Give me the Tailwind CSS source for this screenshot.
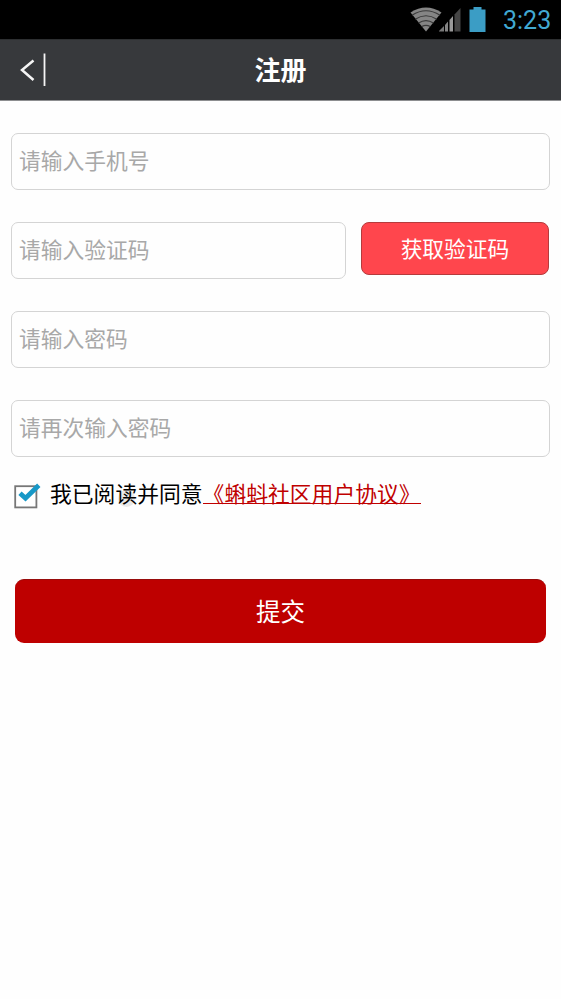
<!DOCTYPE html>
<html lang="zh-CN">
<head>
<meta charset="utf-8">
<title>注册</title>
<script src="https://cdn.jsdelivr.net/npm/@tailwindcss/browser@4"></script>
</head>
<body class="bg-[#fefefe] w-[561px] h-[999px] overflow-hidden font-['Noto_Sans_CJK_SC',sans-serif] text-[21.75px]">
<div class="h-[39px] bg-black flex items-start justify-end pr-[10px]">
  <svg class="w-[32px] h-[25px] mt-[7px]" viewBox="0 0 32 25" fill="none">
    <path d="M0.5 5.5Q16-4.5 31.5 5.5L16 24.5Z" fill="#858585"/>
    <path d="M2 8.3Q16-0.8 30 8.3M5.2 12.3Q16 5.2 26.8 12.3M8.6 16Q16 11.2 23.4 16M11.8 19.6Q16 17 20.2 19.6" stroke="#3a3a3a" stroke-width="1.2"/>
  </svg>
  <svg class="w-[22px] h-[24px] mt-[8px] -ml-[3px]" viewBox="0 0 22 24">
    <path d="M0 23.5V23L5 18V23.5Z" fill="#777"/>
    <path d="M6 23.5V17L9 13.5V23.5Z" fill="#858585"/>
    <path d="M10.5 23.5V12L14 8V23.5Z" fill="#999"/>
    <path d="M15.5 23.5V6.5L21.5 0V23.5Z" fill="#454545"/>
  </svg>
  <svg class="w-[17px] h-[25px] mt-[7px] ml-[8px]" viewBox="0 0 17 25"><path d="M4.5 0H12.5V2.5H16.5V25H.5V2.5H4.5Z" fill="#3b9dc5"/></svg>
  <span class="font-[Roboto,sans-serif] text-[25px] leading-[29px] text-[#41a9d3] ml-[17px] mt-[6px] w-[48px] whitespace-nowrap">3:23</span>
</div>
<header class="h-[62px] bg-[#37393c] border-t border-t-[#2d2f31] border-b border-b-[#8d8e90] grid grid-cols-[60px_1fr_60px] items-center">
  <svg class="w-[28px] h-[34px] ml-[19px]" viewBox="0 0 28 34" fill="none" stroke="#f5f5f5"><path d="M14.5 7.5L3 17L14.5 27" stroke-width="2.5"/><path d="M25.5 0.5V33" stroke-width="1.8"/></svg>
  <h1 class="text-center text-white font-bold text-[26px] leading-[34px] pb-[2px]">注册</h1>
</header>
<main class="pt-[32px]">
  <form class="flex flex-col">
    <div class="flex flex-col gap-[32px] pl-[11px] pr-[11px] text-[#a8a8a8]">
      <div class="h-[57px] border border-[#d4d4d4] rounded-[7px] pl-[7px] leading-[52px]">请输入手机号</div>
      <div class="flex items-start gap-[15px]">
        <div class="w-[335px] h-[57px] border border-[#d4d4d4] rounded-[7px] pl-[7px] leading-[52px]">请输入验证码</div>
        <button type="button" class="w-[188px] h-[53px] border border-[#b53b3c] rounded-[8px] bg-[#ff464d] text-white pb-[2px] leading-[49px]">获取验证码</button>
      </div>
      <div class="h-[57px] border border-[#d4d4d4] rounded-[7px] pl-[7px] leading-[52px]">请输入密码</div>
      <div class="h-[57px] border border-[#d4d4d4] rounded-[7px] pl-[7px] leading-[52px]">请再次输入密码</div>
    </div>
    <div class="flex h-[32px] mt-[21px] pl-[14px] leading-[30px] text-[21.8px] text-black">
      <svg class="w-[28px] h-[26px] mt-[5px] mr-[8px]" viewBox="0 0 28 26" fill="none"><rect x="1.2" y="3.2" width="21.2" height="21.2" fill="#fff" stroke="#777" stroke-width="1.8"/><path d="M6 10.2L11.5 15.2L24.8 2.3" stroke="#1798c7" stroke-width="4.8"/></svg>
      <span class="relative whitespace-nowrap"><span class="absolute left-[68px] top-[12px] size-[17px] rounded-full bg-[#e9e9e9] -z-10"></span>我已阅读并同意</span>
      <a class="text-[#c00000] whitespace-nowrap h-[26px] border-b border-[#c00000]">《蝌蚪社区用户协议》</a>
    </div>
    <button type="button" class="h-[64px] mt-[69px] ml-[15px] mr-[15px] rounded-[9px] bg-[#be0000] border-t border-[#970b0b] text-white text-[24.5px] pb-[2px] leading-[60px]">提交</button>
  </form>
</main>
</body>
</html>
